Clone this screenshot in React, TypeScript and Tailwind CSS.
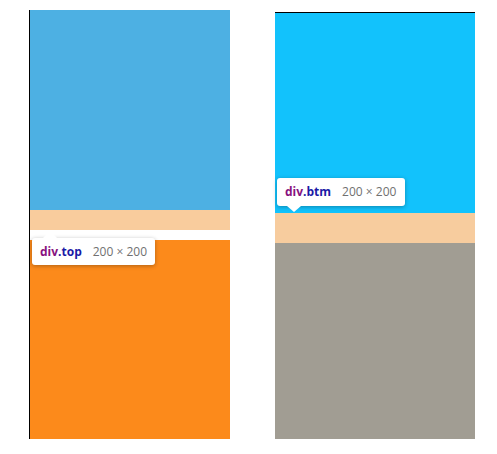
import React from "react";

function Tip({ tag, cls, up }: { tag: string; cls: string; up: boolean }) {
  return (
    <div className="relative flex h-full items-center gap-[11px] rounded-[3px] bg-white px-[8px] shadow-[0_1px_4px_rgba(0,0,0,0.3)]" style={{ fontFamily: '"Open Sans", "Noto Sans", sans-serif' }}>
      <span className="text-[12px] font-bold leading-none">
        <span className="text-[#881280]">{tag}</span>
        <span className="text-[#1a1aa6]">{cls}</span>
      </span>
      <span className="text-[12px] leading-none text-[#707070]">200 × 200</span>
      {up ? (
        <div className="absolute left-[11px] top-[-7px] h-0 w-0 border-x-[7px] border-b-[7px] border-x-transparent border-b-white" />
      ) : (
        <div className="absolute left-[10px] bottom-[-6px] h-0 w-0 border-x-[7px] border-t-[6px] border-x-transparent border-t-white" />
      )}
    </div>
  );
}

export default function App() {
  return (
    <div className="relative h-[454px] w-[497px] bg-white">
      <div className="flex pl-[29px] pt-[10px]">
        <div className="flex w-[202px] flex-col border-l border-black">
          <div className="h-[200px] w-[200px] bg-[#4db0e3]" />
          <div className="h-[20px] w-[200px] bg-[#f9cc9d]" />
          <div className="h-[10px]" />
          <div className="h-[199px] w-[200px] bg-[#fc8a1b]" />
        </div>
        <div className="ml-[44px] mt-[2px] flex w-[200px] flex-col border-t border-black">
          <div className="h-[200px] w-[200px] bg-[#12c2fc]" />
          <div className="h-[30px] w-[200px] bg-[#f7cc9e]" />
          <div className="h-[196px] w-[200px] bg-[#a19d93]" />
        </div>
      </div>
      <div className="absolute left-[32px] top-[238px] h-[27px] w-[123px]">
        <Tip tag="div" cls=".top" up={true} />
      </div>
      <div className="absolute left-[277px] top-[178px] h-[28px] w-[128px]">
        <Tip tag="div" cls=".btm" up={false} />
      </div>
    </div>
  );
}
